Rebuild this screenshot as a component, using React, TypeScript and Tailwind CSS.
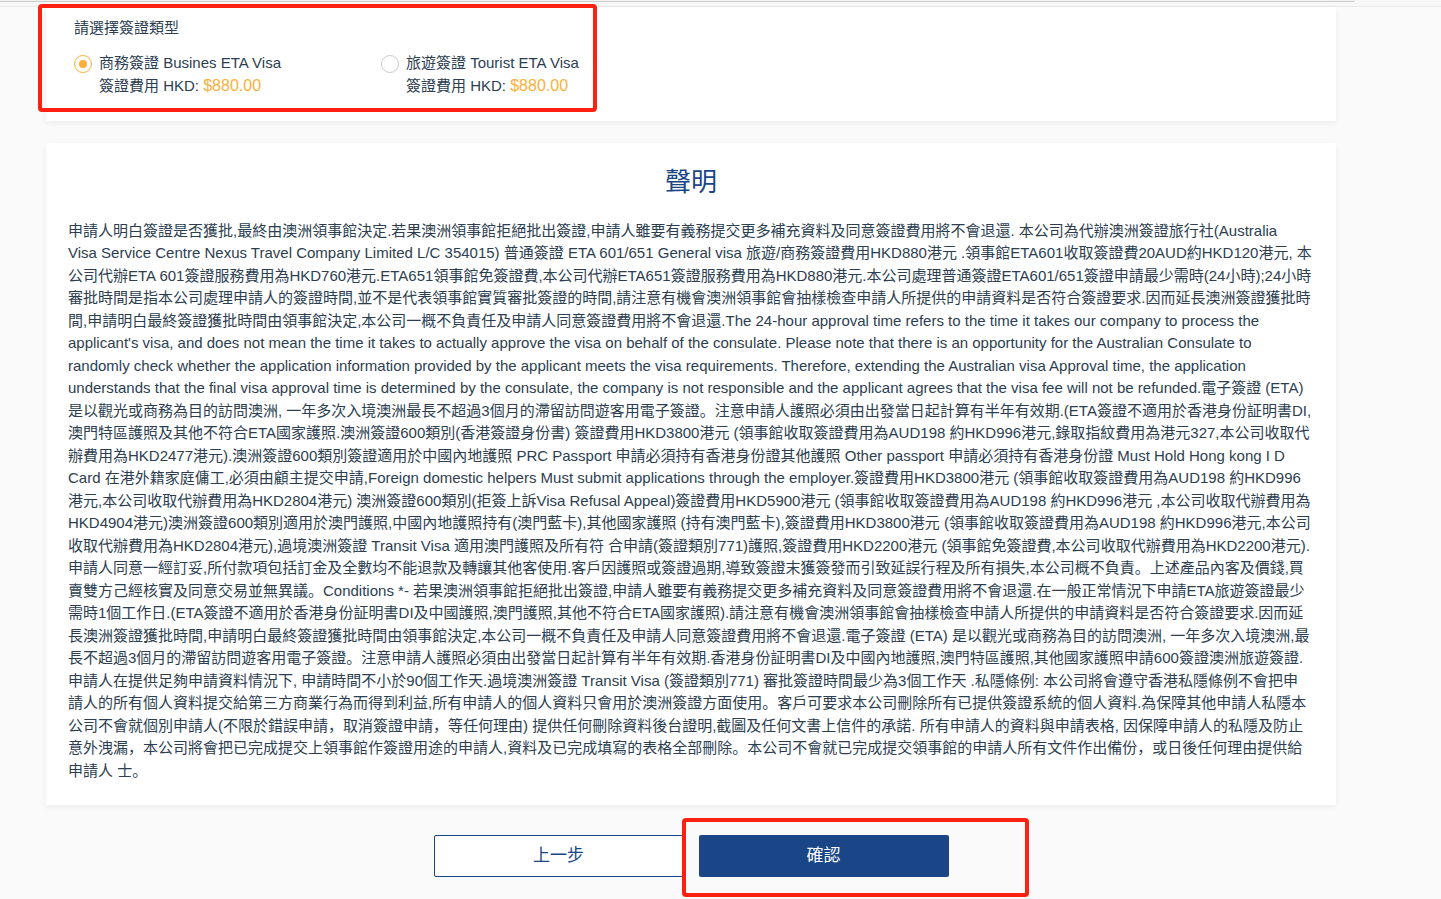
import { useState } from "react";

const VISA_TYPES = [
  { id: "business", name: "商務簽證 Busines ETA Visa", fee: "$880.00" },
  { id: "tourist", name: "旅遊簽證 Tourist ETA Visa", fee: "$880.00" },
];

const STATEMENT = [
  "申請人明白簽證是否獲批,最終由澳洲領事館決定.若果澳洲領事館拒絕批出簽證,申請人雖要有義務提交更多補充資料及同意簽證費用將不會退還. ",
  "本公司為代辦澳洲簽證旅行社(Australia\nVisa Service Centre Nexus Travel Company Limited L/C 354015) 普通簽證 ETA 601/651 General visa 旅遊/商務簽證費用HKD880港元 .",
  "領事館ETA601收取簽證費20AUD約HKD120港元, 本公司代辦ETA 601簽證服務費用為HKD760港元.ETA651領事館免簽證費,本公司代辦ETA651簽證服務費用為HKD880港元.",
  "本公司處理普通簽證ETA601/651簽證申請最少需時(24小時);24小時審批時間是指本公司處理申請人的簽證時間,並不是代表領事館實質審批簽證的時間,",
  "請注意有機會澳洲領事館會抽樣檢查申請人所提供的申請資料是否符合簽證要求.因而延長澳洲簽證獲批時間,申請明白最終簽證獲批時間由領事館決定,本公司一概不負責任及申請人同意簽證費用將不會退還.",
  "The 24-hour approval time refers to the time it takes our company to process the applicant's visa, and does not mean the time it takes to actually approve the visa on behalf of the consulate. ",
  "Please note that there is an opportunity for the Australian Consulate to randomly check whether the application information provided by the applicant meets the visa requirements. ",
  "Therefore, extending the Australian visa Approval time, the application understands that the final visa approval time is determined by the consulate, the company is not responsible and the applicant agrees that the visa fee will not be refunded.",
  "電子簽證 (ETA) 是以觀光或商務為目的訪問澳洲, 一年多次入境澳洲最長不超過3個月的滯留訪問遊客用電子簽證。注意申請人護照必須由出發當日起計算有半年有效期.",
  "(ETA簽證不適用於香港身份証明書DI,澳門特區護照及其他不符合ETA國家護照.澳洲簽證600類別(香港簽證身份書) 簽證費用HKD3800港元 (領事館收取簽證費用為AUD198 約HKD996港元,錄取指紋費用為港元327,本公司收取代辦費用為HKD2477港元).",
  "澳洲簽證600類別簽證適用於中國內地護照 PRC Passport 申請必須持有香港身份證其他護照 Other passport 申請必須持有香港身份證 Must Hold Hong kong I D Card 在港外籍家庭傭工,必須由顧主提交申請,",
  "Foreign domestic helpers Must submit applications through the employer.簽證費用HKD3800港元 (領事館收取簽證費用為AUD198 約HKD996港元,本公司收取代辦費用為HKD2804港元) ",
  "澳洲簽證600類別(拒簽上訴Visa Refusal Appeal)簽證費用HKD5900港元 (領事館收取簽證費用為AUD198 約HKD996港元 ,本公司收取代辦費用為HKD4904港元)",
  "澳洲簽證600類別適用於澳門護照,中國內地護照持有(澳門藍卡),其他國家護照 (持有澳門藍卡),簽證費用HKD3800港元 (領事館收取簽證費用為AUD198 約HKD996港元,本公司收取代辦費用為HKD2804港元),",
  "過境澳洲簽證 Transit Visa 適用澳門護照及所有符 合申請(簽證類別771)護照,簽證費用HKD2200港元 (領事館免簽證費,本公司收取代辦費用為HKD2200港元).",
  "申請人同意一經訂妥,所付款項包括訂金及全數均不能退款及轉讓其他客使用.客戶因護照或簽證過期,導致簽證末獲簽發而引致延誤行程及所有損失,本公司概不負責。上述產品內客及價錢,買賣雙方己經核實及同意交易並無異議。",
  "Conditions *- 若果澳洲領事館拒絕批出簽證,申請人雖要有義務提交更多補充資料及同意簽證費用將不會退還.在一般正常情況下申請ETA旅遊簽證最少需時1個工作日.",
  "(ETA簽證不適用於香港身份証明書DI及中國護照,澳門護照,其他不符合ETA國家護照).請注意有機會澳洲領事館會抽樣檢查申請人所提供的申請資料是否符合簽證要求.",
  "因而延長澳洲簽證獲批時間,申請明白最終簽證獲批時間由領事館決定,本公司一概不負責任及申請人同意簽證費用將不會退還.",
  "電子簽證 (ETA) 是以觀光或商務為目的訪問澳洲, 一年多次入境澳洲,最長不超過3個月的滯留訪問遊客用電子簽證。注意申請人護照必須由出發當日起計算有半年有效期.",
  "香港身份証明書DI及中國內地護照,澳門特區護照,其他國家護照申請600簽證澳洲旅遊簽證.申請人在提供足夠申請資料情況下, 申請時間不小於90個工作天.",
  "過境澳洲簽證 Transit Visa (簽證類別771) 審批簽證時間最少為3個工作天 .私隱條例: 本公司將會遵守香港私隱條例不會把申\n請人的所有個人資料提交給第三方商業行為而得到利益,",
  "所有申請人的個人資料只會用於澳洲簽證方面使用。客戶可要求本公司刪除所有已提供簽證系統的個人資料.為保障其他申請人私隱本公司不會就個別申請人(不限於錯誤申請，取消簽證申請，等任何理由) ",
  "提供任何刪除資料後台證明,截圖及任何文書上信件的承諾. 所有申請人的資料與申請表格, 因保障申請人的私隱及防止意外洩漏，本公司將會把已完成提交上領事館作簽證用途的申請人,資料及已完成填寫的表格全部刪除。",
  "本公司不會就已完成提交領事館的申請人所有文件作出備份，或日後任何理由提供給申請人 士。",
].join("");

const VisaTypeCard = () => {
  const [selected, setSelected] = useState("business");

  return (
    <section className="relative bg-white px-7 pt-[10px] pb-6 shadow-[0_2px_6px_rgba(0,0,0,0.06)]">
      <fieldset>
        <legend className="mb-[11px]">請選擇簽證類型</legend>
        <div className="flex leading-[23px]">
          {VISA_TYPES.map((visa) => (
            <label
              key={visa.id}
              className="flex w-[307px] cursor-pointer items-start gap-[7px]"
            >
              <input
                type="radio"
                name="visaType"
                value={visa.id}
                checked={selected === visa.id}
                onChange={() => setSelected(visa.id)}
                className="mt-1 grid size-[18px] shrink-0 appearance-none place-content-center rounded-full border border-[#cccccc] bg-white before:size-2 before:rounded-full checked:border-[#fbb03b] checked:before:bg-[#fbb03b]"
              />
              <span>
                {visa.name}
                <br />
                簽證費用 HKD:{" "}
                <span className="text-base leading-none text-[#fbb03b]">
                  {visa.fee}
                </span>
              </span>
            </label>
          ))}
        </div>
      </fieldset>
      {/* Red highlight round the visa choices */}
      <div className="pointer-events-none absolute -top-[3px] -left-2 h-[108px] w-[559px] rounded-sm border-4 border-[#ff2012]" />
    </section>
  );
};

const StatementCard = () => (
  <section className="mt-[22px] bg-white px-[22px] pt-[22px] pb-[23px] shadow-[0_2px_6px_rgba(0,0,0,0.06)]">
    <h2 className="mb-[21px] text-center text-[26px] leading-[34px] text-[#1a4587]">
      聲明
    </h2>
    <p className="whitespace-pre-line">{STATEMENT}</p>
  </section>
);

export default function App() {
  return (
    <div className="min-h-screen overflow-hidden bg-[#fafafa] font-['Liberation_Sans','Noto_Sans_CJK_SC',sans-serif] text-[15px] leading-normal text-[#2c3e50]">
      {/* Bottom edge of the browser's address bar */}
      <div className="h-[7px] border-b border-[#e9e9e9] bg-[#f7f7f7] pr-[86px]">
        <div className="h-[2px] rounded-br-sm border-b border-[#cbcbcb] bg-[#f1f3f4]" />
      </div>

      <main className="pr-[105px] pl-[46px]">
        <VisaTypeCard />
        <StatementCard />

        <div className="mt-[30px] flex justify-center gap-[15px] text-[17px]">
          <button
            type="button"
            className="h-[42px] w-[250px] cursor-pointer rounded-xs border border-[#1a4587] bg-white text-[#1a4587]"
          >
            上一步
          </button>
          <div className="relative">
            <button
              type="button"
              className="h-[42px] w-[250px] cursor-pointer rounded-xs bg-[#1a4587] text-white"
            >
              確認
            </button>
            {/* Red highlight round the confirm button */}
            <div className="pointer-events-none absolute -top-[17px] -left-[17px] h-[79px] w-[347px] rounded-sm border-4 border-[#ff2012]" />
          </div>
        </div>
      </main>
    </div>
  );
}
